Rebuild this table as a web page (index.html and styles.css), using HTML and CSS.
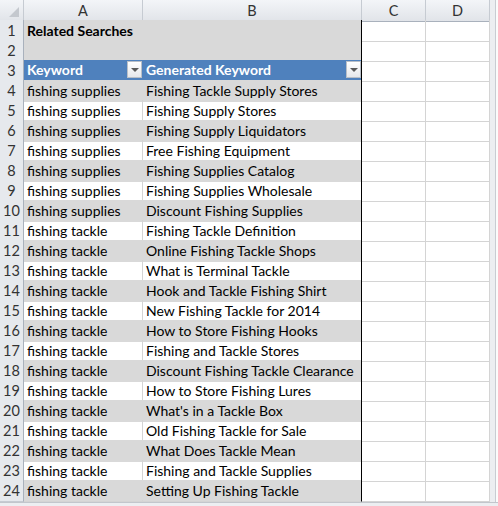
FILE: index.html
```html
<!DOCTYPE html>
<html>
<head>
<meta charset="utf-8">
<link rel="stylesheet" href="styles.css">
</head>
<body>
<div class="sheet">
  <div class="main">
    <div class="grid">
      <div class="row hdr">
        <div class="corner"><svg width="24" height="20" viewBox="0 0 24 20"><polygon points="19,7 19,17 9,17" fill="#c4c8ce"/></svg></div>
        <div class="colh">A</div><div class="colh">B</div><div class="colh">C</div><div class="colh">D</div>
      </div>
      <div class="row"><div class="rowh">1</div><div class="cell ga title">Related Searches</div><div class="cell gb"></div><div class="cell"></div><div class="cell"></div></div>
      <div class="row"><div class="rowh">2</div><div class="cell ga top"></div><div class="cell gb top"></div><div class="cell"></div><div class="cell"></div></div>
      <div class="row"><div class="rowh">3</div><div class="cell th tha"><span>Keyword</span><span class="filter"></span></div><div class="cell th thb"><span>Generated Keyword</span><span class="filter"></span></div><div class="cell"></div><div class="cell"></div></div>
      <div class="row"><div class="rowh">4</div><div class="cell ga">fishing supplies</div><div class="cell gb">Fishing Tackle Supply Stores</div><div class="cell"></div><div class="cell"></div></div>
      <div class="row"><div class="rowh">5</div><div class="cell wa">fishing supplies</div><div class="cell wb">Fishing Supply Stores</div><div class="cell"></div><div class="cell"></div></div>
      <div class="row"><div class="rowh">6</div><div class="cell ga">fishing supplies</div><div class="cell gb">Fishing Supply Liquidators</div><div class="cell"></div><div class="cell"></div></div>
      <div class="row"><div class="rowh">7</div><div class="cell wa">fishing supplies</div><div class="cell wb">Free Fishing Equipment</div><div class="cell"></div><div class="cell"></div></div>
      <div class="row"><div class="rowh">8</div><div class="cell ga">fishing supplies</div><div class="cell gb">Fishing Supplies Catalog</div><div class="cell"></div><div class="cell"></div></div>
      <div class="row"><div class="rowh">9</div><div class="cell wa">fishing supplies</div><div class="cell wb">Fishing Supplies Wholesale</div><div class="cell"></div><div class="cell"></div></div>
      <div class="row"><div class="rowh">10</div><div class="cell ga">fishing supplies</div><div class="cell gb">Discount Fishing Supplies</div><div class="cell"></div><div class="cell"></div></div>
      <div class="row"><div class="rowh">11</div><div class="cell wa">fishing tackle</div><div class="cell wb">Fishing Tackle Definition</div><div class="cell"></div><div class="cell"></div></div>
      <div class="row"><div class="rowh">12</div><div class="cell ga">fishing tackle</div><div class="cell gb">Online Fishing Tackle Shops</div><div class="cell"></div><div class="cell"></div></div>
      <div class="row"><div class="rowh">13</div><div class="cell wa">fishing tackle</div><div class="cell wb">What is Terminal Tackle</div><div class="cell"></div><div class="cell"></div></div>
      <div class="row"><div class="rowh">14</div><div class="cell ga">fishing tackle</div><div class="cell gb">Hook and Tackle Fishing Shirt</div><div class="cell"></div><div class="cell"></div></div>
      <div class="row"><div class="rowh">15</div><div class="cell wa">fishing tackle</div><div class="cell wb">New Fishing Tackle for 2014</div><div class="cell"></div><div class="cell"></div></div>
      <div class="row"><div class="rowh">16</div><div class="cell ga">fishing tackle</div><div class="cell gb">How to Store Fishing Hooks</div><div class="cell"></div><div class="cell"></div></div>
      <div class="row"><div class="rowh">17</div><div class="cell wa">fishing tackle</div><div class="cell wb">Fishing and Tackle Stores</div><div class="cell"></div><div class="cell"></div></div>
      <div class="row"><div class="rowh">18</div><div class="cell ga">fishing tackle</div><div class="cell gb">Discount Fishing Tackle Clearance</div><div class="cell"></div><div class="cell"></div></div>
      <div class="row"><div class="rowh">19</div><div class="cell wa">fishing tackle</div><div class="cell wb">How to Store Fishing Lures</div><div class="cell"></div><div class="cell"></div></div>
      <div class="row"><div class="rowh">20</div><div class="cell ga">fishing tackle</div><div class="cell gb">What's in a Tackle Box</div><div class="cell"></div><div class="cell"></div></div>
      <div class="row"><div class="rowh">21</div><div class="cell wa">fishing tackle</div><div class="cell wb">Old Fishing Tackle for Sale</div><div class="cell"></div><div class="cell"></div></div>
      <div class="row"><div class="rowh">22</div><div class="cell ga">fishing tackle</div><div class="cell gb">What Does Tackle Mean</div><div class="cell"></div><div class="cell"></div></div>
      <div class="row"><div class="rowh">23</div><div class="cell wa">fishing tackle</div><div class="cell wb">Fishing and Tackle Supplies</div><div class="cell"></div><div class="cell"></div></div>
      <div class="row"><div class="rowh">24</div><div class="cell ga">fishing tackle</div><div class="cell gb">Setting Up Fishing Tackle</div><div class="cell"></div><div class="cell"></div></div>
      <div class="row stub"><div class="rowh"></div><div class="cell wa"></div><div class="cell wb"></div><div class="cell"></div><div class="cell"></div></div>
    </div>
    <div class="vstrip"></div>
  </div>
  <div class="hstrip"></div>
</div>
</body>
</html>
```

FILE: styles.css
```css
* { box-sizing: border-box; }
html, body { margin: 0; padding: 0; background: #ffffff; }
.sheet {
  width: 498px;
  height: 506px;
  overflow: hidden;
  display: flex;
  flex-direction: column;
  font-family: Lato, "Liberation Sans", sans-serif;
  font-size: 14px;
  color: #000;
}
.main { display: flex; height: 502px; }
.grid { width: 490px; display: flex; flex-direction: column; }
.row {
  display: grid;
  grid-template-columns: 24px 119px 219px 64px 64px;
  height: 20px;
  flex: none;
}
.row.stub { height: 2px; overflow: hidden; }
.hdr .corner, .hdr .colh {
  background: linear-gradient(#f3f5f8, #e1e4e9);
  border-right: 1px solid #c6cbd2;
  border-bottom: 1px solid #a9b1bc;
}
.corner { display: block; }
.corner svg { display: block; }
.colh {
  text-align: center;
  line-height: 21px;
  color: #333;
  font-size: 14.5px;
}
.rowh {
  background: #e6e9ed;
  border-right: 1px solid #a9b1bc;
  border-bottom: 1px solid #c6cbd2;
  text-align: center;
  line-height: 21px;
  color: #333;
  font-size: 14.5px;
}
.cell {
  border-right: 1px solid #d4d4d4;
  border-bottom: 1px solid #d4d4d4;
  padding: 0 3px;
  line-height: 21px;
  white-space: nowrap;
  overflow: hidden;
}
.ga { background: #d9d9d9; border-color: #d9d9d9; }
.gb { background: #d9d9d9; border-bottom-color: #d9d9d9; border-right-color: #000; }
.wa { border-bottom-color: #d9d9d9; }
.wb { border-bottom-color: #d9d9d9; border-right-color: #000; }
.stub .wa, .stub .wb { border-bottom-color: #d4d4d4; }
.top { border-bottom-color: #000; }
.title { font-weight: bold; }
.th {
  background: #4f81bd;
  color: #fff;
  font-weight: bold;
  border-bottom: 2px solid #000;
  display: flex;
  align-items: flex-start;
  justify-content: space-between;
  padding-right: 0;
  line-height: 20px;
}
.tha { border-right-color: #4f81bd; }
.thb { border-right-color: #000; }
.filter {
  width: 15px;
  height: 17px;
  margin-top: 1px;
  background: linear-gradient(#ffffff, #e6e8eb);
  border: 1px solid #b9bfc7;
  position: relative;
  flex: none;
}
.filter::after {
  content: "";
  position: absolute;
  left: 3px;
  top: 6px;
  border-left: 4px solid transparent;
  border-right: 4px solid transparent;
  border-top: 4px solid #5a5a5a;
}
.vstrip {
  width: 8px;
  background: linear-gradient(to right, #eceef1 0 5px, #c8ccd2 5px 6px, #fbfbfb 6px);
}
.hstrip {
  height: 4px;
  border-top: 1px solid #c2c6cc;
  background: #eceef1;
}
```
